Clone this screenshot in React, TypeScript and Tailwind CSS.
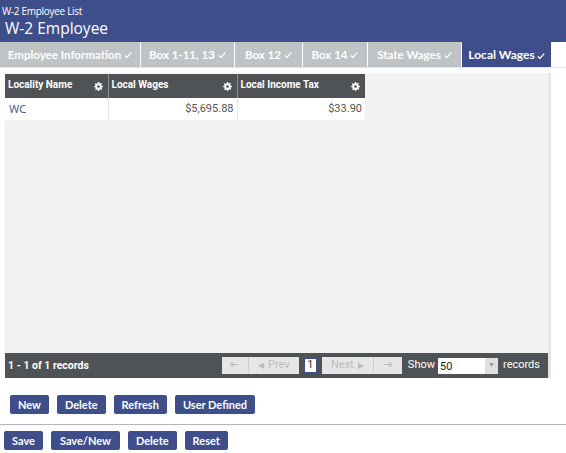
import React from 'react'

const tabs = [
  { label: 'Employee Information', w: 'w-[141px]' },
  { label: 'Box 1-11, 13', w: 'w-[94px]' },
  { label: 'Box 12', w: 'w-[68px]' },
  { label: 'Box 14', w: 'w-[65px]' },
  { label: 'State Wages', w: 'w-[94px]' },
]

function Check({ className = '' }: { className?: string }) {
  return (
    <svg viewBox="0 0 10 10" className={`w-[8px] h-[8px] inline-block ${className}`}>
      <path d="M1 5.5 L3.8 8 L9 2" stroke="currentColor" strokeWidth="1.6" fill="none" />
    </svg>
  )
}

function Gear() {
  return (
    <svg viewBox="0 0 16 16" className="w-[9px] h-[9px]" fill="white">
      <path d="M7 0h2l.4 2.2 1.3.6 1.9-1.3 1.4 1.4-1.3 1.9.6 1.3L16 7v2l-2.2.4-.6 1.3 1.3 1.9-1.4 1.4-1.9-1.3-1.3.6L9 16H7l-.4-2.2-1.3-.6-1.9 1.3-1.4-1.4 1.3-1.9-.6-1.3L0 9V7l2.2-.4.6-1.3-1.3-1.9 1.4-1.4 1.9 1.3 1.3-.6z" />
      <circle cx="8" cy="8" r="2.4" fill="#4f5356" />
    </svg>
  )
}

function Btn({ children, px = 'px-[8px]' }: { children: React.ReactNode; px?: string }) {
  return (
    <button className={`h-[19px] ${px} bg-[#3e4e8a] text-white text-[11px] font-bold rounded-[2px] leading-none font-['Lato',sans-serif]`}>
      {children}
    </button>
  )
}

export default function App() {
  return (
    <div className="w-[566px] h-[453px] bg-white font-['Open_Sans',sans-serif] overflow-hidden">
      <div className="h-[42px] bg-[#3e4e8a] text-white px-[2px] pt-[5px]">
        <div className="text-[10px] leading-[12px] tracking-[-0.3px]">W-2 Employee List</div>
        <div className="text-[15.5px] leading-[20px] pl-[3px] pt-[1px]">W-2 Employee</div>
      </div>

      <div className="flex h-[26px] border-b border-[#e4e4e4] font-['Lato',sans-serif]">
        {tabs.map(t => (
          <div key={t.label} className={`${t.w} shrink-0 bg-[#bfc3c6] border-r border-white text-white text-[11.5px] font-bold flex items-center justify-center gap-[3px]`}>
            {t.label} <Check />
          </div>
        ))}
        <div className="w-[89px] shrink-0 bg-[#3e4e8a] text-white text-[12px] font-bold flex items-center justify-center gap-[2px]">
          Local Wages <Check className="mt-[3px]" />
        </div>
      </div>

      <div className="mx-[5px] mt-[5px] w-[546px] h-[305px] flex flex-col bg-[#f2f2f2] border-r-[3px] border-[#e6e6e6] font-['Roboto',sans-serif]">
        <div className="flex-1">
          <table className="border-collapse text-[10px] mt-[1px]">
            <thead>
              <tr className="bg-[#4f5356] text-white h-[24px]">
                <th className="w-[103px] border-r border-[#8a8e91] px-[3px] text-left font-bold">
                  <div className="flex items-center justify-between pr-[2px]"><span className="-mt-[4px]">Locality Name</span><Gear /></div>
                </th>
                <th className="w-[129px] border-r border-[#8a8e91] px-[3px] text-left font-bold">
                  <div className="flex items-center justify-between pr-[2px]"><span className="-mt-[4px]">Local Wages</span><Gear /></div>
                </th>
                <th className="w-[128px] px-[3px] text-left font-bold">
                  <div className="flex items-center justify-between pr-[2px]"><span className="-mt-[4px]">Local Income Tax</span><Gear /></div>
                </th>
              </tr>
            </thead>
            <tbody>
              <tr className="bg-white h-[22px] text-[11px]">
                <td className="px-[4px] text-[#3e4e8a] border-r border-[#e4e4e4] font-['Open_Sans',sans-serif]">WC</td>
                <td className="px-[3px] text-right text-[#555] border-r border-[#e4e4e4]">$5,695.88</td>
                <td className="px-[3px] text-right text-[#555]">$33.90</td>
              </tr>
            </tbody>
          </table>
        </div>
        <div className="h-[25px] bg-[#4f5356] flex items-center text-white text-[10.5px] font-bold pl-[3px] pr-[8px]">
          <span className="flex-1">1 - 1 of 1 records</span>
          <div className="flex items-center h-[17px] bg-[#e6e6e6] text-[#bdbdbd] font-normal text-[11px]">
            <span className="w-[27px] h-full flex items-center justify-center border-r border-[#cfcfcf]">⇤</span>
            <span className="w-[50px] h-full flex items-center justify-center gap-[4px]"><span className="text-[8px]">◀</span>Prev</span>
          </div>
          <span className="mx-[5px] w-[13px] h-[15px] bg-white border border-[#3e4e8a] text-[#333] font-normal text-[11px] flex items-center justify-center">1</span>
          <div className="flex items-center h-[17px] bg-[#e6e6e6] text-[#bdbdbd] font-normal text-[11px]">
            <span className="w-[52px] h-full flex items-center justify-center gap-[4px] border-r border-[#cfcfcf]">Next<span className="text-[8px]">▶</span></span>
            <span className="w-[28px] h-full flex items-center justify-center">⇥</span>
          </div>
          <span className="ml-[6px] mr-[3px] font-normal text-[11px]">Show</span>
          <div className="w-[60px] h-[16px] bg-white flex items-stretch">
            <span className="flex-1 text-[#222] font-normal text-[11px] pl-[2px] pt-[2px] leading-[14px]">50</span>
            <span className="w-[13px] bg-[#e0e0e0] text-[#999] text-[7px] flex items-center justify-center">▼</span>
          </div>
          <span className="ml-[5px] font-normal text-[11px]">records</span>
        </div>
      </div>

      <div className="flex gap-[8px] pl-[10px] mt-[17px]">
        <Btn>New</Btn>
        <Btn>Delete</Btn>
        <Btn>Refresh</Btn>
        <Btn>User Defined</Btn>
      </div>

      <div className="mt-[10px] border-t border-[#b5b5b5]" />

      <div className="flex gap-[8px] pl-[4px] mt-[6px]">
        <Btn>Save</Btn>
        <Btn px="px-[9px]">Save/New</Btn>
        <Btn>Delete</Btn>
        <Btn>Reset</Btn>
      </div>
    </div>
  )
}
